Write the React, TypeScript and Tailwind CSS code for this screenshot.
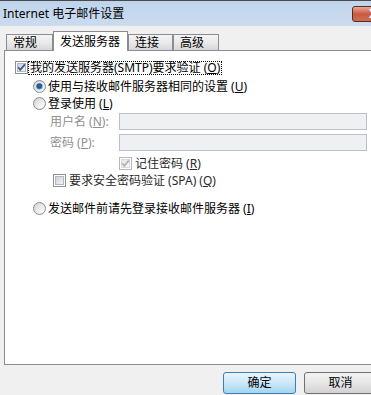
import React, { useId } from "react";

const CJK = "font-['Noto_Sans','Noto_Sans_CJK_SC',sans-serif]";

function CheckBox({ checked, disabled }: { checked?: boolean; disabled?: boolean }) {
  const id = useId().replace(/:/g, "");
  return (
    <svg width="13" height="13" viewBox="0 0 13 13" className="shrink-0 block">
      <defs>
        <linearGradient id={`cb${id}`} x1="0" y1="0" x2="1" y2="1">
          <stop offset="0" stopColor={disabled ? "#e6e6e6" : "#cbd0d6"} />
          <stop offset="1" stopColor={disabled ? "#fafafa" : "#f6f6f6"} />
        </linearGradient>
      </defs>
      <rect x="0.5" y="0.5" width="12" height="12" fill="#fff" stroke={disabled ? "#b8b8b8" : "#8e8f8f"} />
      <rect x="2.5" y="2.5" width="8" height="8" fill={`url(#cb${id})`} stroke={disabled ? "#dadada" : "#b4b8be"} />
      {checked && (
        <path
          d="M3.2 6.3 L5.3 8.9 L9.9 3.4"
          fill="none"
          stroke={disabled ? "#b3b3b3" : "#3b5a9a"}
          strokeWidth="1.8"
        />
      )}
    </svg>
  );
}

function Radio({ checked }: { checked?: boolean }) {
  const id = useId().replace(/:/g, "");
  return (
    <svg width="13" height="13" viewBox="0 0 13 13" className="shrink-0 block">
      <defs>
        <linearGradient id={`ro${id}`} x1="0" y1="0" x2="1" y2="1">
          <stop offset="0" stopColor="#d2d2d2" />
          <stop offset="1" stopColor="#fbfbfb" />
        </linearGradient>
        <linearGradient id={`ri${id}`} x1="0" y1="0" x2="1" y2="1">
          <stop offset="0" stopColor="#d8d8d8" />
          <stop offset="1" stopColor="#ffffff" />
        </linearGradient>
        <radialGradient id={`rc${id}`} cx="0.45" cy="0.4" r="0.6">
          <stop offset="0" stopColor="#2b6ca8" />
          <stop offset="0.55" stopColor="#1d5590" />
          <stop offset="1" stopColor="#7cc4ee" />
        </radialGradient>
      </defs>
      <circle cx="6.5" cy="6.5" r="6" fill={`url(#ro${id})`} stroke="#8c8c8c" />
      <circle cx="6.5" cy="6.5" r="4.2" fill={`url(#ri${id})`} />
      {checked && <circle cx="6.5" cy="6.5" r="3.3" fill={`url(#rc${id})`} />}
    </svg>
  );
}

function Tab({ label, selected, w }: { label: string; selected?: boolean; w: string }) {
  if (selected) {
    return (
      <div
        className={`relative z-10 -mb-px h-[20px] ${w} shrink-0 bg-white border border-b-0 border-[#898c95] flex items-center pl-[6px] text-[12px] text-black`}
      >
        {label}
      </div>
    );
  }
  return (
    <div
      className={`h-[16px] ${w} shrink-0 border border-b-0 border-[#898c95] bg-gradient-to-b from-[#f4f4f4] via-[#e9e9e9] to-[#d8d8d8] flex items-center pl-[6px] text-[12px] text-black`}
    >
      {label}
    </div>
  );
}

export default function App() {
  return (
    <div className={`w-[371px] h-[395px] overflow-hidden bg-[#f0f0f0] flex flex-col ${CJK} leading-none`}>
      {/* Title bar */}
      <div className="h-[26px] shrink-0 border-t border-[#4a4a4a] bg-gradient-to-b from-[#bfd4ec] to-[#cbdcef] flex items-center pl-[3px]">
        <span className="text-[12px] text-black">Internet 电子邮件设置</span>
        <div className="ml-auto -mr-[24px] w-[43px] h-[16px] shrink-0 rounded-[3px] border border-[#5a2a24] bg-gradient-to-b from-[#e9a996] via-[#c95a40] to-[#cf6f50] flex items-center justify-center">
          <span className="text-white font-bold text-[12px] font-['DejaVu_Sans',sans-serif]">X</span>
        </div>
      </div>

      {/* Tabs */}
      <div className="h-[24px] shrink-0 flex items-end pl-[6px]">
        <Tab label="常规" w="w-[47px]" />
        <Tab label="发送服务器" selected w="w-[75px]" />
        <Tab label="连接" w="w-[45px]" />
        <Tab label="高级" w="w-[46px]" />
      </div>

      {/* Panel */}
      <div className="ml-[4px] w-[380px] h-[315px] shrink-0 bg-white border border-[#898c95] pl-[10px] pt-[10px] flex flex-col text-[12px] text-black">
        {/* Row 1 */}
        <div className="h-[13px] flex items-center">
          <CheckBox checked />
          <span className="ml-[0px] border border-dotted border-black px-[1px] h-[14px] flex items-center whitespace-nowrap">
            我的发送服务器(SMTP)要求验证 (<u>O</u>)
          </span>
        </div>
        {/* Row 2 */}
        <div className="mt-[6px] ml-[18px] h-[13px] flex items-center">
          <Radio checked />
          <span className="ml-[2px] whitespace-nowrap">
            使用与接收邮件服务器相同的设置 (<u>U</u>)
          </span>
        </div>
        {/* Row 3 */}
        <div className="mt-[4px] ml-[18px] h-[13px] flex items-center">
          <Radio />
          <span className="ml-[2px] whitespace-nowrap">
            登录使用 (<u>L</u>)
          </span>
        </div>
        {/* Row 4 */}
        <div className="mt-[3px] ml-[35px] h-[17px] flex items-center">
          <span className="w-[69px] shrink-0 text-[#8f8f8f] whitespace-nowrap">
            用户名 (<u>N</u>):
          </span>
          <div className="w-[248px] h-[17px] border border-[#b6c2ce] bg-[#eef0f2]" />
        </div>
        {/* Row 5 */}
        <div className="mt-[4px] ml-[35px] h-[17px] flex items-center">
          <span className="w-[69px] shrink-0 text-[#8f8f8f] whitespace-nowrap">
            密码 (<u>P</u>):
          </span>
          <div className="w-[248px] h-[17px] border border-[#b6c2ce] bg-[#eef0f2]" />
        </div>
        {/* Row 6 */}
        <div className="mt-[6px] ml-[104px] h-[13px] flex items-center">
          <CheckBox checked disabled />
          <span className="ml-[3px] whitespace-nowrap text-[#2a2a2a]">
            记住密码 (<u>R</u>)
          </span>
        </div>
        {/* Row 7 */}
        <div className="mt-[4px] ml-[38px] h-[13px] flex items-center">
          <CheckBox />
          <span className="ml-[3px] whitespace-nowrap text-[#2a2a2a]">
            要求安全密码验证 (SPA) (<u>Q</u>)
          </span>
        </div>
        {/* Row 8 */}
        <div className="mt-[15px] ml-[18px] h-[13px] flex items-center">
          <Radio />
          <span className="ml-[2px] whitespace-nowrap">
            发送邮件前请先登录接收邮件服务器 (<u>I</u>)
          </span>
        </div>
      </div>

      {/* Buttons */}
      <div className="flex justify-end gap-[8px] pt-[7px] text-[12px] text-black">
        <button className="w-[73px] h-[22px] shrink-0 rounded-[3px] border border-[#3c7fb1] bg-gradient-to-b from-[#e8f5fc] via-[#cbe8f7] to-[#a3d5f1] flex items-center justify-center">
          确定
        </button>
        <button className="-mr-[6px] w-[73px] h-[22px] shrink-0 rounded-[3px] border border-[#707070] bg-gradient-to-b from-[#f3f3f3] via-[#e6e6e6] to-[#d2d2d2] flex items-center justify-center">
          取消
        </button>
      </div>
    </div>
  );
}
